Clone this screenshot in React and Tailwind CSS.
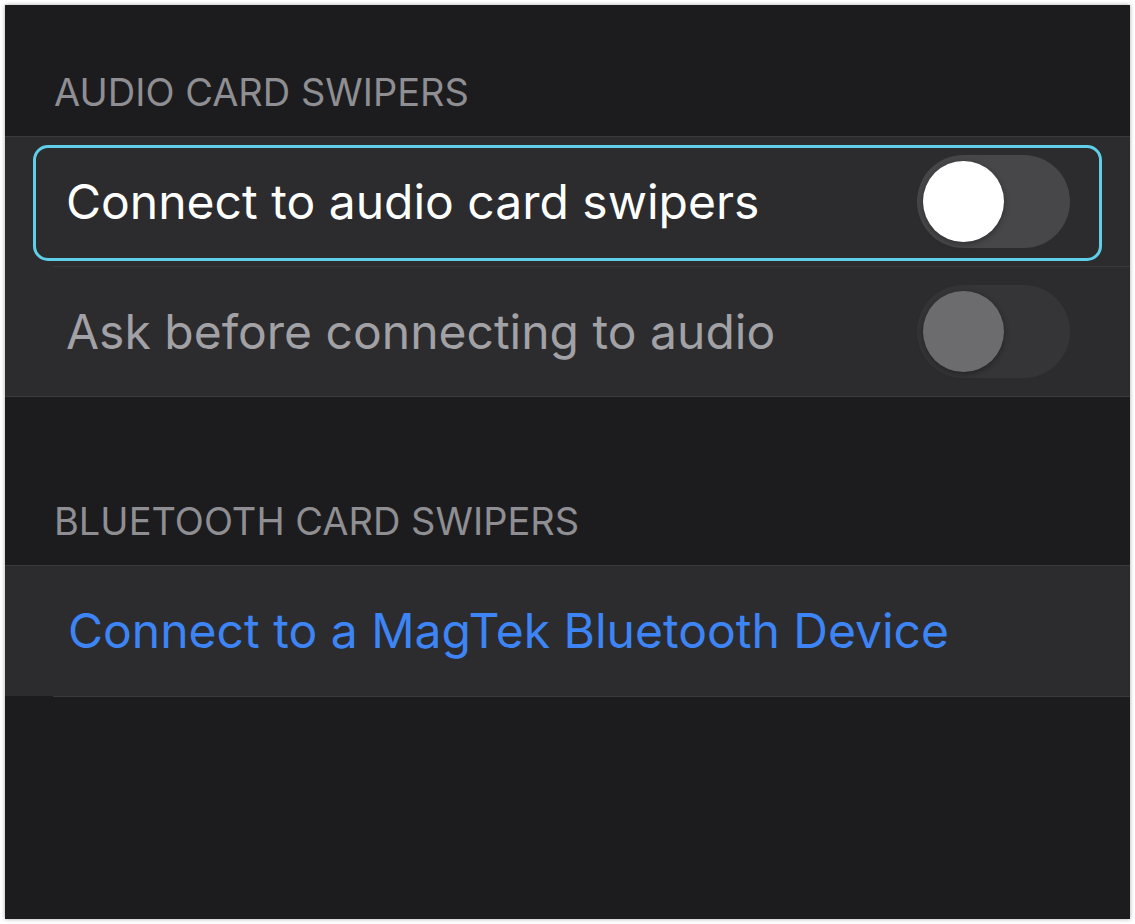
import React from 'react';

// iOS-style toggle, off state
const Toggle = ({ disabled }) => (
  <div
    className={`flex h-[93px] w-[153px] shrink-0 items-center rounded-full px-[6px] ${
      disabled ? 'bg-[#353538]' : 'bg-[#47474a]'
    }`}
  >
    <div
      className={`h-[81px] w-[81px] rounded-full shadow-[0_2px_6px_rgba(0,0,0,0.35)] ${
        disabled ? 'bg-[#6c6c6f]' : 'bg-white'
      }`}
    />
  </div>
);

const SectionHeader = ({ children, className = '' }) => (
  <div className={`flex items-end pl-[49px] pb-[25px] ${className}`}>
    <span className="text-[38px] leading-none text-[#8e8e93]">{children}</span>
  </div>
);

export default function App() {
  return (
    <div className="min-h-[924px] w-full bg-white p-[5px]" style={{ fontFamily: 'Inter, "Noto Sans", sans-serif' }}>
      <div className="flex h-[914px] flex-col bg-[#1c1c1e] shadow-[0_0_4px_rgba(0,0,0,0.35)]">
        <SectionHeader className="h-[131px]">AUDIO CARD SWIPERS</SectionHeader>

        <div className="border-y border-[#3a3a3c] bg-[#2c2c2e]">
          <div className="relative flex h-[129px] items-center justify-between pl-[61px] pr-[60px]">
            <div className="pointer-events-none absolute inset-x-[28px] top-[8px] bottom-[5px] rounded-[15px] border-[3px] border-[#5fcfe9]" />
            <span className="text-[48px] leading-none text-white">Connect to audio card swipers</span>
            <Toggle />
          </div>
          <div className="ml-[48px] border-b border-[#3a3a3c]" />
          <div className="flex h-[129px] items-center justify-between pl-[61px] pr-[60px]">
            <span className="text-[48px] leading-none text-[#a1a1a6]">Ask before connecting to audio</span>
            <Toggle disabled />
          </div>
        </div>

        <SectionHeader className="h-[168px]">BLUETOOTH CARD SWIPERS</SectionHeader>

        <div className="border-t border-[#3a3a3c]">
          <div className="flex h-[130px] items-center bg-[#2c2c2e] pl-[63px]">
            <span className="text-[48px] leading-none text-[#3d85f6]">Connect to a MagTek Bluetooth Device</span>
          </div>
          <div className="ml-[48px] border-b border-[#3a3a3c]" />
        </div>
      </div>
    </div>
  );
}
